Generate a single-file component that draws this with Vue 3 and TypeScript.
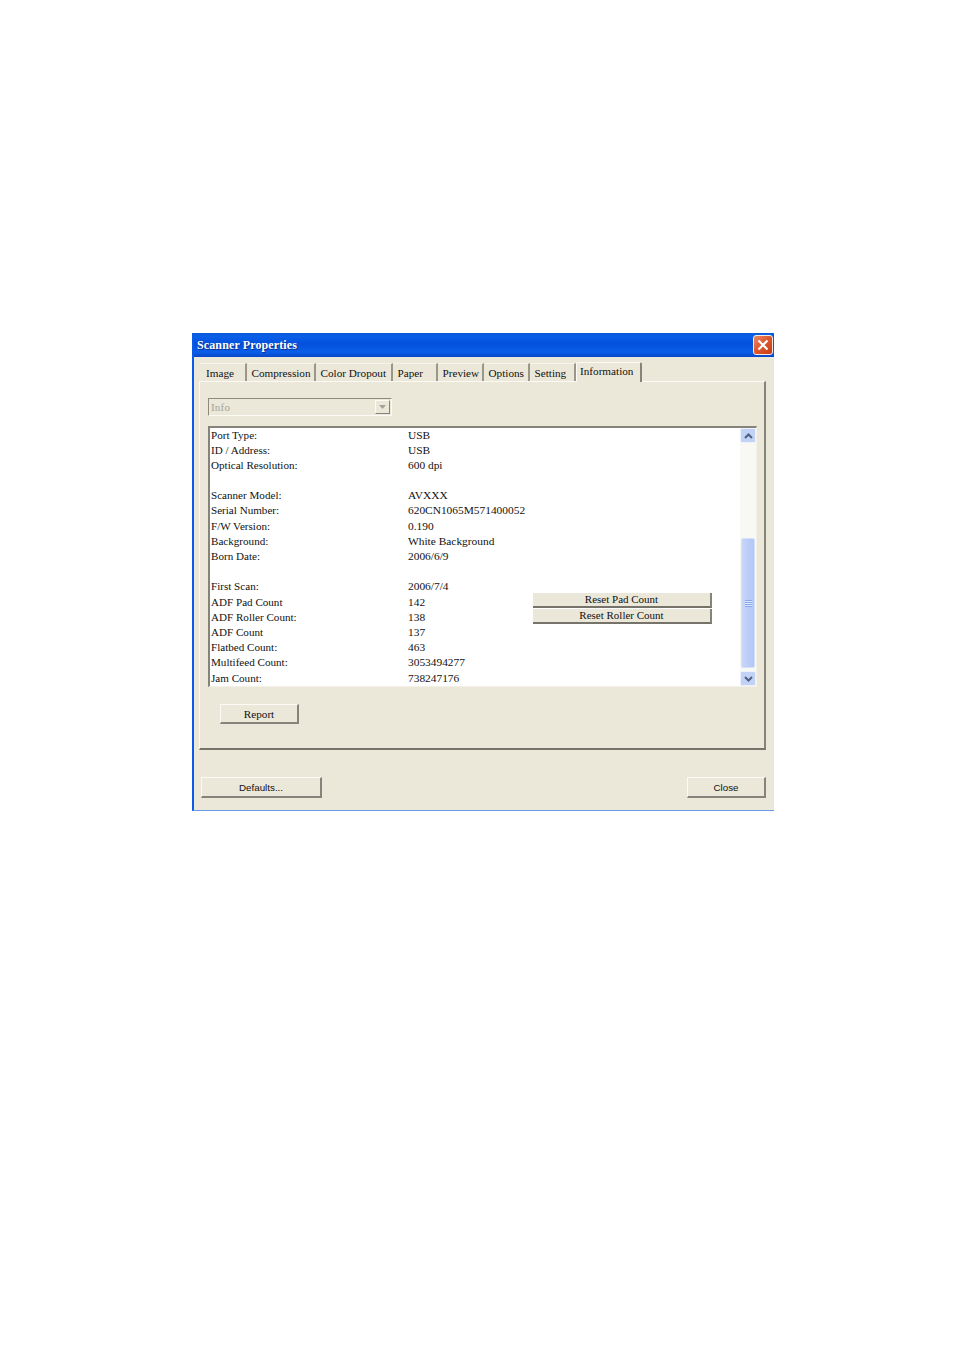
<script setup lang="ts">
interface Tab { name: string; width: number; active?: boolean }
interface Row { label: string; value: string; action?: string }

const tabs: Tab[] = [
  { name: 'Image', width: 48 },
  { name: 'Compression', width: 69 },
  { name: 'Color Dropout', width: 77 },
  { name: 'Paper', width: 45 },
  { name: 'Preview', width: 46 },
  { name: 'Options', width: 46 },
  { name: 'Setting', width: 46 },
  { name: 'Information', width: 66, active: true },
]

const rows: Row[] = [
  { label: 'Port Type:', value: 'USB' },
  { label: 'ID / Address:', value: 'USB' },
  { label: 'Optical Resolution:', value: '600 dpi' },
  { label: '', value: '' },
  { label: 'Scanner Model:', value: 'AVXXX' },
  { label: 'Serial Number:', value: '620CN1065M571400052' },
  { label: 'F/W Version:', value: '0.190' },
  { label: 'Background:', value: 'White Background' },
  { label: 'Born Date:', value: '2006/6/9' },
  { label: '', value: '' },
  { label: 'First Scan:', value: '2006/7/4' },
  { label: 'ADF Pad Count', value: '142', action: 'Reset Pad Count' },
  { label: 'ADF Roller Count:', value: '138', action: 'Reset Roller Count' },
  { label: 'ADF Count', value: '137' },
  { label: 'Flatbed Count:', value: '463' },
  { label: 'Multifeed Count:', value: '3053494277' },
  { label: 'Jam Count:', value: '738247176' },
]
</script>

<template>
  <div class="page">
    <div class="window">
      <div class="titlebar">
        <span class="title">Scanner Properties</span>
        <button class="close-x" aria-label="Close">
          <svg width="12" height="12" viewBox="0 0 12 12">
            <path d="M1.5 1.5 L10.5 10.5 M10.5 1.5 L1.5 10.5" stroke="#fff" stroke-width="2.2" fill="none" />
          </svg>
        </button>
      </div>
      <div class="content">
        <div class="tabs">
          <div
            v-for="t in tabs"
            :key="t.name"
            class="tab"
            :class="{ active: t.active }"
            :style="{ width: t.width + 'px' }"
          >{{ t.name }}</div>
        </div>
        <div class="panel">
          <div class="combo">
            <span class="combo-text">Info</span>
            <span class="combo-btn">
              <svg width="7" height="4" viewBox="0 0 7 4"><path d="M0 0H7L3.500 4Z" fill="#a5a397" /></svg>
            </span>
          </div>
          <div class="list">
            <div class="rows">
              <div v-for="(r, i) in rows" :key="i" class="row">
                <span class="label">{{ r.label }}</span>
                <span class="value">{{ r.value }}</span>
                <button v-if="r.action" class="reset">{{ r.action }}</button>
              </div>
            </div>
            <div class="scrollbar">
              <div class="sb-btn">
                <svg width="9" height="6" viewBox="0 0 9 6"><path d="M1 5 L4.500 1.500 L8 5" stroke="#4d6185" stroke-width="2" fill="none" /></svg>
              </div>
              <div class="sb-track">
                <div class="sb-thumb">
                  <span class="grip"></span>
                </div>
              </div>
              <div class="sb-btn">
                <svg width="9" height="6" viewBox="0 0 9 6"><path d="M1 1 L4.500 4.500 L8 1" stroke="#4d6185" stroke-width="2" fill="none" /></svg>
              </div>
            </div>
          </div>
          <button class="btn report">Report</button>
        </div>
        <div class="footer">
          <button class="btn sans defaults">Defaults...</button>
          <button class="btn sans close">Close</button>
        </div>
      </div>
    </div>
  </div>
</template>

<style>
html, body { margin: 0; background: #fff; }
</style>

<style scoped>
.page {
  width: 954px;
  height: 1351px;
  box-sizing: border-box;
  padding: 333px 0 0 192px;
  background: #fff;
  font-family: "Liberation Serif", "Times New Roman", serif;
  font-size: 11.2px;
  color: #111;
}
.window {
  width: 582px;
  height: 478px;
  box-sizing: border-box;
  display: flex;
  flex-direction: column;
  background: #ebe8d9;
  border-left: 2px solid #0a5ce8;
  border-bottom: 1px solid #6a9be8;
}
.titlebar {
  height: 24px;
  flex: none;
  display: flex;
  align-items: center;
  justify-content: space-between;
  padding: 0 1px 0 3px;
  background: linear-gradient(180deg, #0a5ad6 0%, #0a5fe8 15%, #0450dc 45%, #0a5ee8 80%, #0846c8 100%);
}
.title {
  color: #fff;
  font-weight: 700;
  font-size: 12px;
  letter-spacing: 0.12px;
  padding-top: 1px;
  text-shadow: 1px 1px 0 #0a2f90;
}
.close-x {
  width: 20px;
  height: 20px;
  padding: 0;
  display: flex;
  align-items: center;
  justify-content: center;
  border: 1px solid #f4ece8;
  border-radius: 3px;
  background: linear-gradient(135deg, #ea8a68 0%, #dc5a30 45%, #c83a18 100%);
}
.content {
  flex: 1;
  padding: 0 8px 0 5px;
  display: flex;
  flex-direction: column;
}
.tabs {
  height: 24px;
  flex: none;
  display: flex;
  align-items: flex-end;
  position: relative;
  z-index: 1;
}
.tab {
  box-sizing: border-box;
  height: 18px;
  padding: 2px 0 0 3.5px;
  border-right: 2px solid #9a9788;
  border-top: 1px solid #f6f4ec;
  border-left: 1px solid transparent;
  line-height: 14px;
  white-space: nowrap;
  flex: none;
}
.tab:first-child { padding-left: 6px; }
.tab.active {
  height: 20px;
  margin-bottom: -1px;
  padding: 1px 0 0 3px;
  border-left: 1px solid #fbfaf4;
  border-top: 1px solid #fbfaf4;
  border-right: 2px solid #86847a;
  background: #ebe8d9;
  border-radius: 2px 2px 0 0;
}
.panel {
  height: 369px;
  flex: none;
  box-sizing: border-box;
  padding: 16px 8px 0 8px;
  border: 1px solid #fbfaf4;
  border-right: 2px solid #86847a;
  border-bottom: 2px solid #76746a;
  display: flex;
  flex-direction: column;
  align-items: flex-start;
}
.combo {
  width: 184px;
  height: 18px;
  box-sizing: border-box;
  display: flex;
  align-items: center;
  justify-content: space-between;
  border: 1px solid #8c8a7e;
  border-right-color: #fbfaf4;
  border-bottom-color: #fbfaf4;
  padding: 0 1px 1px 2px;
}
.combo-text {
  color: #a5a397;
  font-size: 11px;
  letter-spacing: 0.2px;
}
.combo-btn {
  width: 15px;
  height: 14px;
  box-sizing: border-box;
  display: flex;
  align-items: center;
  justify-content: center;
  border: 1px solid #fbfaf4;
  border-right-color: #86847a;
  border-bottom-color: #86847a;
}
.list {
  margin-top: 10px;
  width: 549px;
  height: 261px;
  box-sizing: border-box;
  display: flex;
  background: #fff;
  border-top: 2px solid #86847a;
  border-left: 2px solid #86847a;
  border-bottom: 1px solid #f4f2e8;
  border-right: 1px solid #f4f2e8;
}
.rows {
  flex: 1;
  min-width: 0;
  padding-left: 1px;
  margin-top: -0.6px;
}
.row {
  display: flex;
  align-items: center;
  height: 15.19px;
  line-height: 15px;
  white-space: nowrap;
  position: relative;
}
.label { width: 197px; flex: none; font-size: 11.1px; }
.value { flex: none; font-size: 11.4px; }
.reset {
  position: absolute;
  left: 322px;
  top: -1px;
  width: 179px;
  height: 15px;
  box-sizing: border-box;
  padding: 0;
  font: inherit;
  font-size: 11px;
  line-height: 13px;
  color: #111;
  background: #ebe8d9;
  border: none;
  border-right: 2px solid #86847a;
  border-bottom: 2px solid #76746a;
}
.scrollbar {
  width: 16px;
  flex: none;
  display: flex;
  flex-direction: column;
  background: #f8f8f4;
}
.sb-btn {
  height: 15px;
  flex: none;
  display: flex;
  align-items: center;
  justify-content: center;
  box-sizing: border-box;
  border: 1px solid #eef2fc;
  border-radius: 2px;
  background: #c2d2f6;
}
.sb-track {
  flex: 1;
  display: flex;
  flex-direction: column;
  justify-content: flex-end;
  padding-bottom: 3px;
}
.sb-thumb {
  height: 130px;
  box-sizing: border-box;
  margin: 0 1px;
  display: flex;
  align-items: center;
  justify-content: center;
  border-radius: 2px;
  background: linear-gradient(90deg, #c8d6f8, #bccdf7 50%, #b4c7f5);
  border: 1px solid #d4dffa;
}
.grip {
  width: 7px;
  height: 7px;
  background: repeating-linear-gradient(180deg, #8aa6e8 0 1px, #dbe5fb 1px 2px);
}
.btn {
  box-sizing: border-box;
  padding: 0;
  font: inherit;
  color: #111;
  background: #ebe8d9;
  border: 1px solid #fbfaf4;
  border-right: 2px solid #86847a;
  border-bottom: 2px solid #86847a;
}
.report {
  width: 79px;
  height: 20px;
  margin: 17px 0 0 12px;
}
.footer {
  margin-top: 27px;
  display: flex;
  justify-content: space-between;
}
.sans {
  font-family: "Liberation Sans", Arial, sans-serif;
  font-size: 9.8px;
  height: 21px;
  padding-top: 1px;
}
.defaults { width: 121px; margin-left: 2px; }
.close { width: 79px; }
</style>
